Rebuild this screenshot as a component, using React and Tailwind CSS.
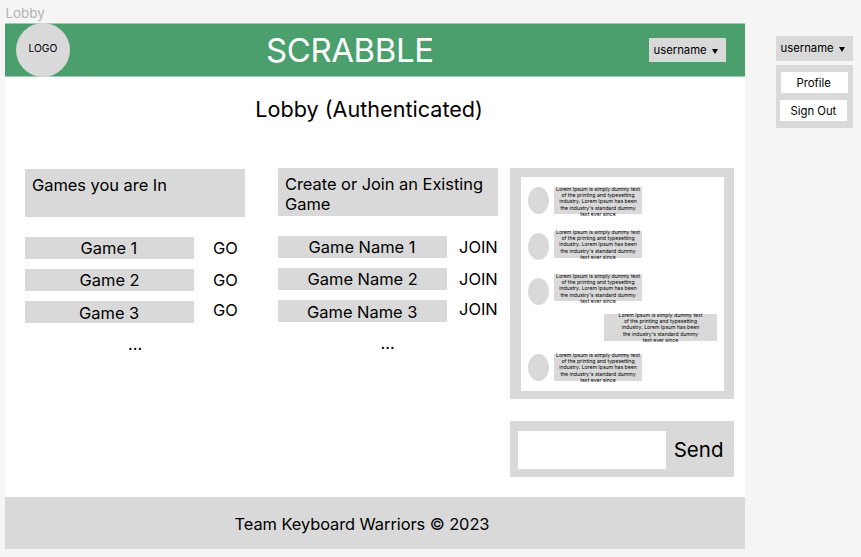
const myGames = [
  { name: "Game 1", row: "h-[22px] mt-5", label: "pl-[55.5px] pt-[1px]", go: "pt-[1px]" },
  { name: "Game 2", row: "h-[22px] mt-[10px]", label: "pl-[54.5px] pt-[1px]", go: "pt-[1px]" },
  { name: "Game 3", row: "h-[22px] mt-[10px]", label: "pl-[54px] pt-[2px]", go: "-mt-[1px]" },
];

const openGames = [
  { name: "Game Name 1", row: "h-[22px] mt-5", label: "pl-[30.5px] pt-[1px]", go: "pt-[1px]" },
  { name: "Game Name 2", row: "h-[22px] mt-[10px]", label: "pl-[29.5px] pt-[1px]", go: "pt-[1px]" },
  { name: "Game Name 3", row: "h-[22px] mt-[10px]", label: "pl-[29px] pt-[2px]", go: "-mt-[1px]" },
];

const lines = [
  "Lorem Ipsum is simply dummy text",
  "of the printing and typesetting",
  "industry. Lorem Ipsum has been",
  "the industry's standard dummy",
  "text ever since",
];

function Bubble({ className }) {
  return (
    <div className={`flex h-[27px] flex-none flex-col items-center justify-center bg-[#d9d9d9] text-[5.14px] leading-[6.2px] ${className}`}>
      {lines.map((line) => (
        <span key={line} className="whitespace-nowrap">{line}</span>
      ))}
    </div>
  );
}

function Message({ className = "", avatar = "", bubble = "" }) {
  return (
    <div className={`flex items-start ${className}`}>
      <div className={`ml-[7px] h-[27px] w-[21px] flex-none rounded-[50%] bg-[#d9d9d9] ${avatar}`} />
      <Bubble className={`ml-[5px] w-[88px] ${bubble}`} />
    </div>
  );
}

function Username({ className }) {
  return (
    <div className={`flex items-start bg-[#d9d9d9] text-[11.3px] leading-[14px] ${className}`}>
      <span className="w-[58.5px] whitespace-nowrap">username</span>
      <svg className="mt-[6px] h-[5px] w-[6px]" viewBox="0 0 6 5">
        <path d="M0 0h6L3 5z" fill="#000" />
      </svg>
    </div>
  );
}

function GameList({ title, games, action, className, actionClass, dotsClass }) {
  return (
    <section className={`w-[220px] flex-none ${className}`}>
      <h2 className="h-12 bg-[#d9d9d9] pt-[6px] pl-[7px] leading-5 tracking-[-0.03px]">{title}</h2>
      {games.map((g) => (
        <div key={g.name} className={`flex leading-5 ${g.row}`}>
          <div className={`w-[169px] flex-none bg-[#d9d9d9] whitespace-nowrap ${g.label}`}>{g.name}</div>
          <div className={`whitespace-nowrap ${actionClass} ${g.go}`}>{action}</div>
        </div>
      ))}
      <div className={`mt-[11px] leading-5 ${dotsClass}`}>...</div>
    </section>
  );
}

export default function App() {
  return (
    <div className="flex h-[557px] w-[861px] overflow-hidden bg-[#f5f5f5] font-['Inter',sans-serif] text-[16.44px] text-black">
      <div className="ml-[5px] w-[740px] flex-none">
        <div className="h-[23px] pt-[5px] pl-[0.5px] text-[13.4px] leading-4 text-[#b3b3b3]">Lobby</div>
        <header className="flex h-[54px] items-start border-y border-[#9dcbb0] bg-[#4b9f6d]">
          <div className="-mt-px ml-[11px] h-[54px] w-[54px] flex-none rounded-[50%] bg-[#d9d9d9] pt-[19px] pl-[12.5px] text-[10.28px] leading-3">LOGO</div>
          <h1 className="ml-[196px] w-[383px] flex-none pt-[6px] text-[32.9px] leading-10 tracking-[-0.35px] text-white">SCRABBLE</h1>
          <Username className="mt-[14px] h-6 w-[77px] pt-[5px] pl-[4.5px]" />
        </header>
        <main className="h-[420px] bg-white">
          <h2 className="h-[91px] pt-[19px] pl-[250.3px] text-[21.6px] leading-[26px]">Lobby (Authenticated)</h2>
          <div className="flex items-start">
            <GameList title="Games you are In" games={myGames} action="GO" className="mt-px ml-5" actionClass="pl-[19px]" dotsClass="pl-[103px]" />
            <GameList
              title={<>Create or Join an Existing<br />Game</>}
              games={openGames}
              action="JOIN"
              className="ml-[33px]"
              actionClass="pl-[12px]"
              dotsClass="pl-[102.5px]"
            />
            <aside className="ml-[12px] w-[224px] flex-none">
              <div className="h-[231px] bg-[#d9d9d9] pt-[9px] pr-[10px] pl-[11px]">
                <div className="h-[214px] bg-white pt-[10px]">
                  <Message bubble="pt-[2px]" />
                  <Message className="mt-[17px]" avatar="mt-[2px]" />
                  <Message className="mt-[14px]" avatar="mt-[4px]" bubble="pt-[2px]" />
                  <Bubble className="mt-[9px] ml-[83px] w-[113px]" />
                  <Message className="mt-[13px]" />
                </div>
              </div>
              <div className="mt-[22px] flex h-14 items-start bg-[#d9d9d9] pt-[10px] pl-[8px]">
                <div className="h-[38px] w-[148px] flex-none bg-white" />
                <span className="pt-[6px] pl-[7.7px] text-[20.5px] leading-[26px]">Send</span>
              </div>
            </aside>
          </div>
        </main>
        <footer className="h-[52px] bg-[#d9d9d9] pt-[17px] pl-[229.5px] leading-5 tracking-[-0.08px]">Team Keyboard Warriors © 2023</footer>
      </div>
      <div className="ml-[31px] w-[77px] flex-none pt-[36px] text-[11.3px] leading-[14px]">
        <Username className="h-[25px] pt-[5px] pl-[4.5px]" />
        <div className="mt-[4px] h-[63px] bg-[#d9d9d9] pt-[7px]">
          <div className="ml-[5px] h-[21px] w-[67px] bg-white pt-[4px] pl-[15.5px]">Profile</div>
          <div className="mt-[7px] ml-[4px] h-[21px] w-[67px] bg-white pt-[4px] pl-[10.5px] whitespace-nowrap">Sign Out</div>
        </div>
      </div>
    </div>
  );
}
